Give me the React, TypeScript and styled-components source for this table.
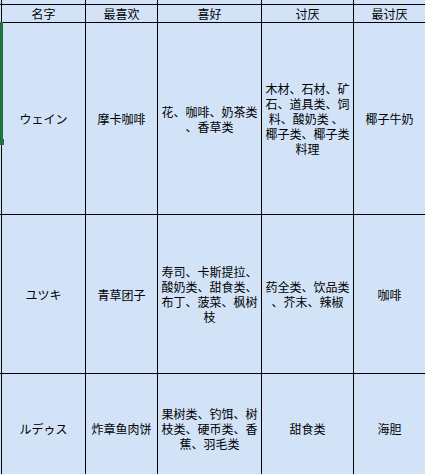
import styled, { createGlobalStyle } from 'styled-components'

const GlobalStyle = createGlobalStyle`
    html, body {
        margin: 0;
        padding: 0;
        background: #d2e3f8;
        overflow: hidden;
    }
`

interface Row {
    height: number
    cells: string[][]
}

// each cell is a list of its wrapped lines, as the sheet shows them
const rows: Row[] = [
    { height: 4, cells: [[], [], [], [], []] },
    { height: 17, cells: [['名字'], ['最喜欢'], ['喜好'], ['讨厌'], ['最讨厌']] },
    {
        height: 191,
        cells: [
            ['ウェイン'],
            ['摩卡咖啡'],
            ['花、咖啡、奶茶类', '、香草类'],
            ['木材、石材、矿', '石、道具类、饲', '料、酸奶类\u00a0、\u00a0', '椰子类、椰子类', '料理'],
            ['椰子牛奶'],
        ],
    },
    {
        height: 158,
        cells: [
            ['ユツキ'],
            ['青草团子'],
            ['寿司、卡斯提拉、', '酸奶类、甜食类、', '布丁、菠菜、枫树', '枝'],
            ['药全类、饮品类', '、芥末、辣椒'],
            ['咖啡'],
        ],
    },
    {
        height: 109,
        cells: [
            ['ルデゥス'],
            ['炸章鱼肉饼'],
            ['果树类、钓饵、树', '枝类、硬币类、香', '蕉、羽毛类'],
            ['甜食类'],
            ['海胆'],
        ],
    },
]

export default function App() {
    return (
        <>
            <GlobalStyle />
            <Page>
                <Sheet rowHeights={rows.map((r) => r.height)}>
                    {rows.map((row, ri) => [
                        <Cell key={`${ri}-edge`} />,
                        ...row.cells.map((lines, ci) => (
                            <Cell key={`${ri}-${ci}`}>
                                <div>
                                    {lines.map((line, li) => (
                                        <Line key={li}>{line}</Line>
                                    ))}
                                </div>
                            </Cell>
                        )),
                    ])}
                </Sheet>
                <SelectionEdge />
                <FillHandle />
            </Page>
        </>
    )
}

const Page = styled.div`
    position: relative;
    width: 425px;
    height: 474px;
    overflow: hidden;
    font-family: "Noto Sans CJK SC", "Noto Sans CJK JP", "Noto Sans", sans-serif;
    font-size: 12px;
    color: #000;
`

const Sheet = styled.div<{ rowHeights: number[] }>`
    display: grid;
    grid-template-columns: 1px 83px 71px 103px 91px 1fr;
    grid-template-rows: ${(props) => props.rowHeights.map((h) => `${h}px`).join(' ')};
    gap: 1px;
    background: #000;
    width: 425px;
`

const Cell = styled.div`
    display: flex;
    align-items: center;
    justify-content: center;
    text-align: center;
    background: #d2e3f8;
    overflow: hidden;
    line-height: 15px;
`

const Line = styled.div`
    white-space: pre;
`

const SelectionEdge = styled.div`
    position: absolute;
    left: 0;
    top: 22px;
    width: 3px;
    height: 118px;
    background: #1f7244;
`

const FillHandle = styled.div`
    position: absolute;
    left: 0;
    top: 139px;
    width: 4px;
    height: 6px;
    background: #1f7244;
`
